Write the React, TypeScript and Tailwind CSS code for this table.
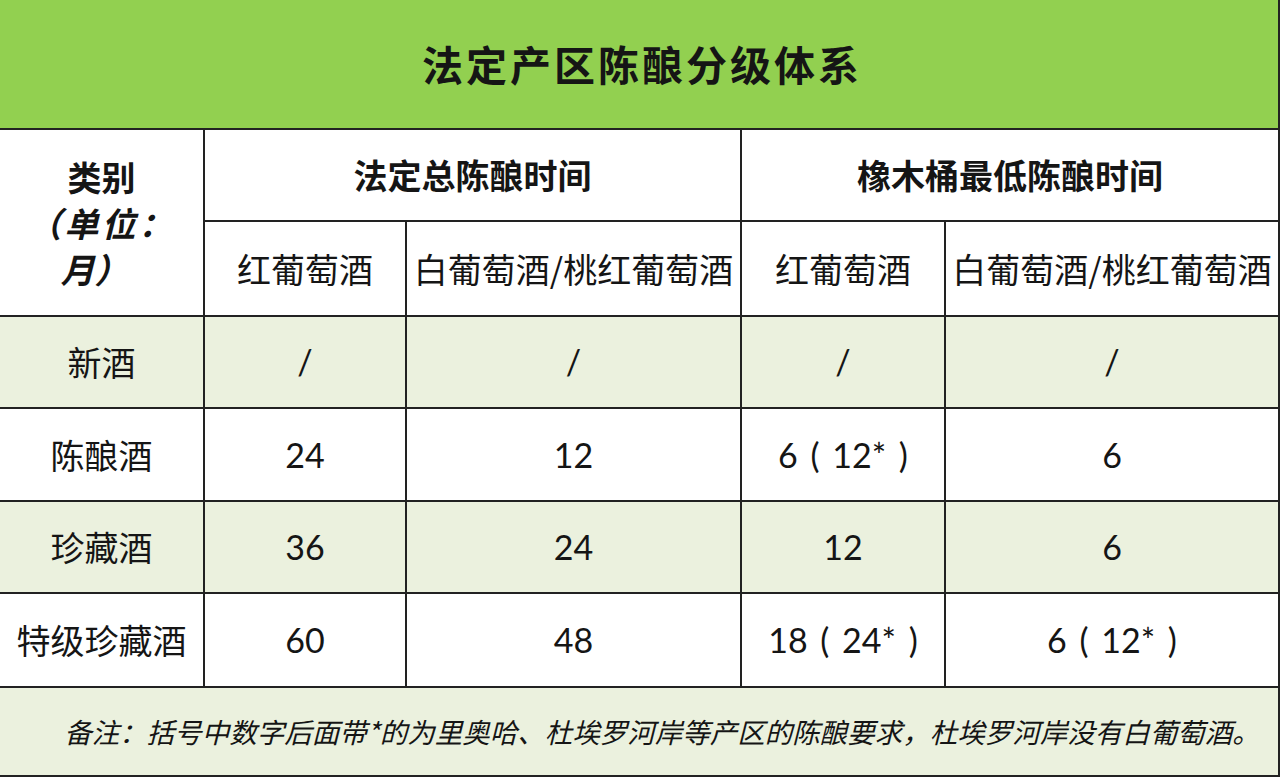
import React from "react";

const cjk = { fontFamily: '"Noto Sans CJK SC", "Noto Sans", sans-serif' };
const num = { fontFamily: 'Lato, "Noto Sans CJK SC", sans-serif', wordSpacing: "4px" };

function Cell({
  children,
  className = "",
  green = false,
  digits = false,
}: {
  children: React.ReactNode;
  className?: string;
  green?: boolean;
  digits?: boolean;
}) {
  return (
    <div
      className={`flex items-center justify-center text-[34px] text-[#151515] leading-none whitespace-nowrap ${
        green ? "bg-[#ebf1de]" : "bg-white"
      } ${className}`}
      style={digits ? num : cjk}
    >
      {children}
    </div>
  );
}

export default function App() {
  const rows: { name: string; v: string[]; green: boolean }[] = [
    { name: "新酒", v: ["/", "/", "/", "/"], green: true },
    { name: "陈酿酒", v: ["24", "12", "6 ( 12* )", "6"], green: false },
    { name: "珍藏酒", v: ["36", "24", "12", "6"], green: true },
    { name: "特级珍藏酒", v: ["60", "48", "18 ( 24* )", "6 ( 12* )"], green: false },
  ];
  return (
    <div className="w-[1280px] h-[782px] bg-white flex flex-col overflow-hidden" style={cjk}>
      <div className="h-[130px] bg-[#92d050] border-b-2 border-r-2 border-[#222] flex items-center justify-center">
        <span className="text-[41px] font-bold text-[#151515] tracking-[3px] ml-[6px]" style={cjk}>
          法定产区陈酿分级体系
        </span>
      </div>
      <div className="grid grid-cols-[203px_200px_333px_202px_1fr] grid-rows-[90px_93px_90px_91px_90px_92px] gap-[2px] bg-[#222] border-r-2 border-b-2 border-[#222]">
        <Cell className="row-span-2 flex-col font-bold">
          <span className="leading-[46px]">类别</span>
          <span className="italic leading-[46px] tracking-[3px]">（单位：</span>
          <span className="italic leading-[46px] pr-[14px]">月）</span>
        </Cell>
        <Cell className="col-span-2 font-bold">法定总陈酿时间</Cell>
        <Cell className="col-span-2 font-bold">橡木桶最低陈酿时间</Cell>
        <Cell>红葡萄酒</Cell>
        <Cell>白葡萄酒/桃红葡萄酒</Cell>
        <Cell>红葡萄酒</Cell>
        <Cell>白葡萄酒/桃红葡萄酒</Cell>
        {rows.map((r) => (
          <React.Fragment key={r.name}>
            <Cell green={r.green}>{r.name}</Cell>
            {r.v.map((v, i) => (
              <Cell key={i} green={r.green} digits>
                {v}
              </Cell>
            ))}
          </React.Fragment>
        ))}
      </div>
      <div className="h-[89px] bg-[#ebf1de] border-b-2 border-r-2 border-[#222] flex items-center justify-center">
        <span className="italic text-[27.5px] text-[#151515] whitespace-nowrap ml-[46px]" style={cjk}>
          备注：括号中数字后面带*的为里奥哈、杜埃罗河岸等产区的陈酿要求，杜埃罗河岸没有白葡萄酒。
        </span>
      </div>
    </div>
  );
}
